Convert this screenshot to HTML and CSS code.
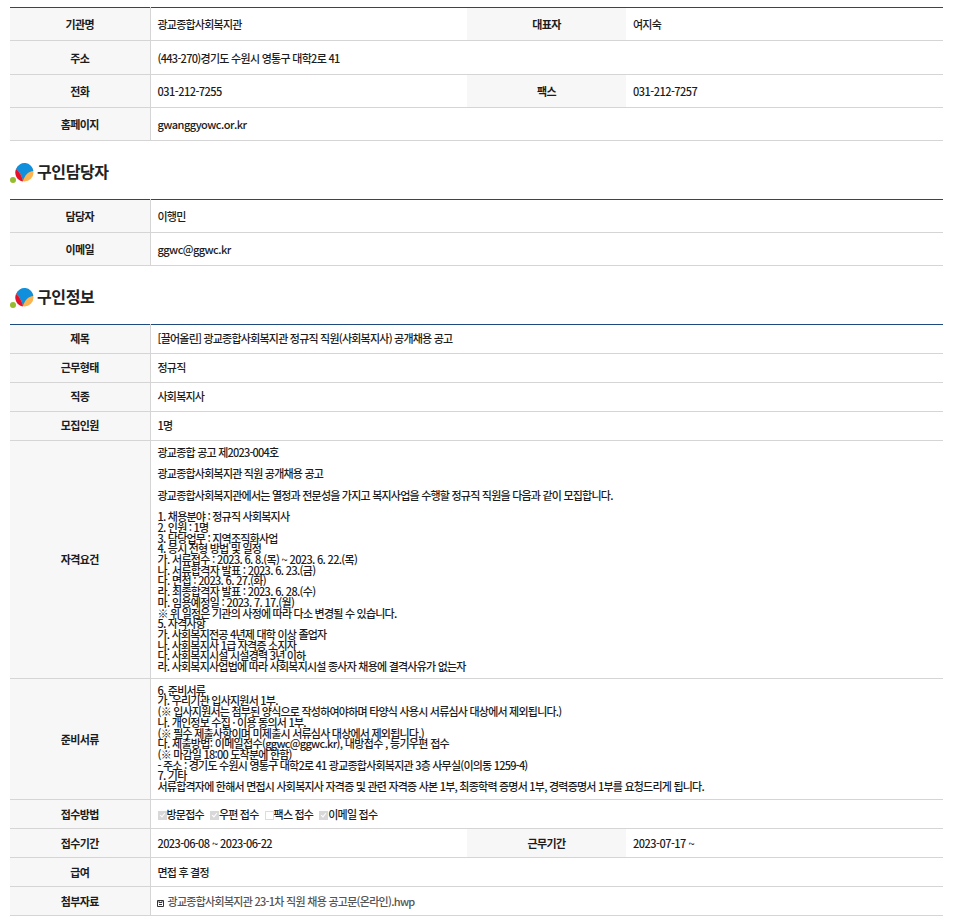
FILE: index.html
```html
<!DOCTYPE html>
<html lang="ko">
<head>
<meta charset="utf-8">
<title>구인정보</title>
<link rel="stylesheet" href="styles.css">
</head>
<body>
<table class="info first">
<colgroup><col class="c-th"><col class="c-td"><col class="c-th2"><col class="c-td"></colgroup>
<tr class="h33"><th>기관명</th><td>광교종합사회복지관</td><th>대표자</th><td>여지숙</td></tr>
<tr class="h34"><th>주소</th><td colspan="3" class="addr">(443-270)경기도 수원시 영통구 대학2로 41</td></tr>
<tr class="h33"><th>전화</th><td class="num">031-212-7255</td><th>팩스</th><td class="num">031-212-7257</td></tr>
<tr class="h33"><th>홈페이지</th><td colspan="3" class="num">gwanggyowc.or.kr</td></tr>
</table>
<h2 class="title"><svg class="logo" width="24" height="21" viewBox="0 0 24 21"><circle cx="14.5" cy="9.5" r="9" fill="#fbb450"/><path d="M6 6A9 9 0 0 1 23.4 8C18 8.5 15 12 13 18C12 13 9 8 6 6Z" fill="#0f8fdc"/><path d="M6 6C9 8 12 13 13 18.4A9 9 0 0 1 6 6Z" fill="#e60f2c"/><circle cx="3" cy="17" r="3" fill="#95bb2e"/></svg>구인담당자</h2>
<table class="info">
<colgroup><col class="c-th"><col class="c-td"><col class="c-th2"><col class="c-td"></colgroup>
<tr class="h33"><th>담당자</th><td colspan="3">이행민</td></tr>
<tr class="h33"><th>이메일</th><td colspan="3" class="num">ggwc@ggwc.kr</td></tr>
</table>
<h2 class="title t2"><svg class="logo" width="24" height="21" viewBox="0 0 24 21"><circle cx="14.5" cy="9.5" r="9" fill="#fbb450"/><path d="M6 6A9 9 0 0 1 23.4 8C18 8.5 15 12 13 18C12 13 9 8 6 6Z" fill="#0f8fdc"/><path d="M6 6C9 8 12 13 13 18.4A9 9 0 0 1 6 6Z" fill="#e60f2c"/><circle cx="3" cy="17" r="3" fill="#95bb2e"/></svg>구인정보</h2>
<table class="info">
<colgroup><col class="c-th"><col class="c-td"><col class="c-th2"><col class="c-td"></colgroup>
<tr class="h29 up"><th>제목</th><td colspan="3">[끌어올린] 광교종합사회복지관 정규직 직원(사회복지사) 공개채용 공고</td></tr>
<tr class="h29 up"><th>근무형태</th><td colspan="3">정규직</td></tr>
<tr class="h29 up"><th>직종</th><td colspan="3">사회복지사</td></tr>
<tr class="h29 up"><th>모집인원</th><td colspan="3">1명</td></tr>
<tr><th>자격요건</th><td colspan="3" class="long">광교종합 공고 제2023-004호<br><br>광교종합사회복지관 직원 공개채용 공고<br><br>광교종합사회복지관에서는 열정과 전문성을 가지고 복지사업을 수행할 정규직 직원을 다음과 같이 모집합니다.<br><br>1. 채용분야 : 정규직 사회복지사<br>2. 인원 : 1명<br>3. 담당업무 : 지역조직화사업<br>4. 응시 전형 방법 및 일정<br><span class="dated">가. 서류접수 : 2023. 6. 8.(목) ~ 2023. 6. 22.(목)</span><br><span class="dated">나. 서류합격자 발표 : 2023. 6. 23.(금)</span><br><span class="dated">다. 면접 : 2023. 6. 27.(화)</span><br><span class="dated">라. 최종합격자 발표 : 2023. 6. 28.(수)</span><br><span class="dated">마. 임용예정일 : 2023. 7. 17.(월)</span><br>※ 위 일정은 기관의 사정에 따라 다소 변경될 수 있습니다.<br>5. 자격사항<br>가. 사회복지전공 4년제 대학 이상 졸업자<br>나. 사회복지사 1급 자격증 소지자<br>다. 사회복지시설 시설경력 3년 이하<br>라. 사회복지사업법에 따라 사회복지시설 종사자 채용에 결격사유가 없는자</td></tr>
<tr><th>준비서류</th><td colspan="3" class="long docs">6. 준비서류<br>가. 우리기관 입사지원서 1부.<br>(※ 입사지원서는 첨부된 양식으로 작성하여야하며 타양식 사용시 서류심사 대상에서 제외됩니다.)<br>나. 개인정보 수집 · 이용 동의서 1부.<br>(※ 필수 제출사항이며 미제출시 서류심사 대상에서 제외됩니다.)<br><span class="dated">다. 제출방법: 이메일접수(ggwc@ggwc.kr), 내방접수 , 등기우편 접수</span><br>(※ 마감일 18:00 도착분에 한함)<br>- 주소 : 경기도 수원시 영통구 대학2로 41 광교종합사회복지관 3층 사무실(이의동 1259-4)<br>7. 기타<br>서류합격자에 한해서 면접시 사회복지사 자격증 및 관련 자격증 사본 1부, 최종학력 증명서 1부, 경력증명서 1부를 요청드리게 됩니다.</td></tr>
<tr class="h29 low"><th>접수방법</th><td colspan="3"><label class="chk"><span class="box on"></span>방문접수</label><label class="chk"><span class="box on"></span>우편 접수</label><label class="chk"><span class="box"></span>팩스 접수</label><label class="chk"><span class="box on"></span>이메일 접수</label></td></tr>
<tr class="h29 low"><th>접수기간</th><td class="num date">2023-06-08 ~ 2023-06-22</td><th>근무기간</th><td class="num">2023-07-17 ~</td></tr>
<tr class="h29 low"><th>급여</th><td colspan="3">면접 후 결정</td></tr>
<tr class="h29 low"><th>첨부자료</th><td colspan="3"><a class="file" href="#"><svg class="disk" width="7" height="7" viewBox="0 0 7 7"><path d="M.5.5h6v6h-6zM2 .5v2h3v-2M2 4.5h3" fill="none" stroke="#333" stroke-width="1"/></svg>광교종합사회복지관 23-1차 직원 채용 공고문(온라인).hwp</a></td></tr>
</table>
</body>
</html>
```
FILE: styles.css
```css
html, body { margin: 0; padding: 0; background: #fff; }
body {
  padding: 7px 21px 0 10px;
  font-family: "Noto Sans CJK KR", "Noto Sans", sans-serif;
  font-size: 11px;
  color: #1c1c1c;
  letter-spacing: -0.78px;
}
.info {
  width: 933px;
  table-layout: fixed;
  border-collapse: collapse;
  border-top: 1px solid #1f4a80;
}
.c-th { width: 140px; }
.c-td { width: 317px; }
.c-th2 { width: 159px; }
.info th {
  background: #f7f7f7;
  font-weight: 700;
  letter-spacing: -0.68px;
  text-align: center;
  padding: 0;
  border-bottom: 1px solid #d5d5d5;
}
.info th:first-child { border-right: 1px solid #d5d5d5; }
.info td {
  padding: 0 7px;
  font-weight: 500;
  border-bottom: 1px solid #d5d5d5;
}
.info td.num { letter-spacing: -0.52px; }
.info td.num.date { letter-spacing: -0.61px; }
.info td.addr { letter-spacing: -0.71px; }
.dated { letter-spacing: -0.68px; }
.h33 { height: 33px; }
.h34 { height: 34px; }
.h29 { height: 29px; }
.up th, .up td { padding-bottom: 2px; }
.low th, .low td { padding-bottom: 0; }
.info td.long { line-height: 10.7px; padding: 6px 7px; }
.info td.docs { padding-bottom: 7px; }
.title {
  display: flex;
  align-items: center;
  margin: 0;
  height: 58px;
  padding-top: 1px;
  box-sizing: border-box;
  font-size: 16px;
  font-weight: 700;
  letter-spacing: -0.4px;
  color: #222;
}
.logo { margin: 6px 3px 0 0; }
.chk { margin-right: 6px; }
.box {
  display: inline-block;
  box-sizing: border-box;
  position: relative;
  width: 9px;
  height: 9px;
  vertical-align: -1px;
  border: 1px solid #ddd;
  background: #fff;
}
.box.on { background: #d8d8d8; border-color: #d8d8d8; }
.box.on::after {
  content: "";
  position: absolute;
  left: 2px;
  top: 0;
  width: 2px;
  height: 4px;
  border: solid #fff;
  border-width: 0 1px 1px 0;
  transform: rotate(40deg);
}
.file { color: #555; text-decoration: none; letter-spacing: -0.72px; }
.disk { margin-right: 4px; vertical-align: -1px; margin-left: -1px; }
```
